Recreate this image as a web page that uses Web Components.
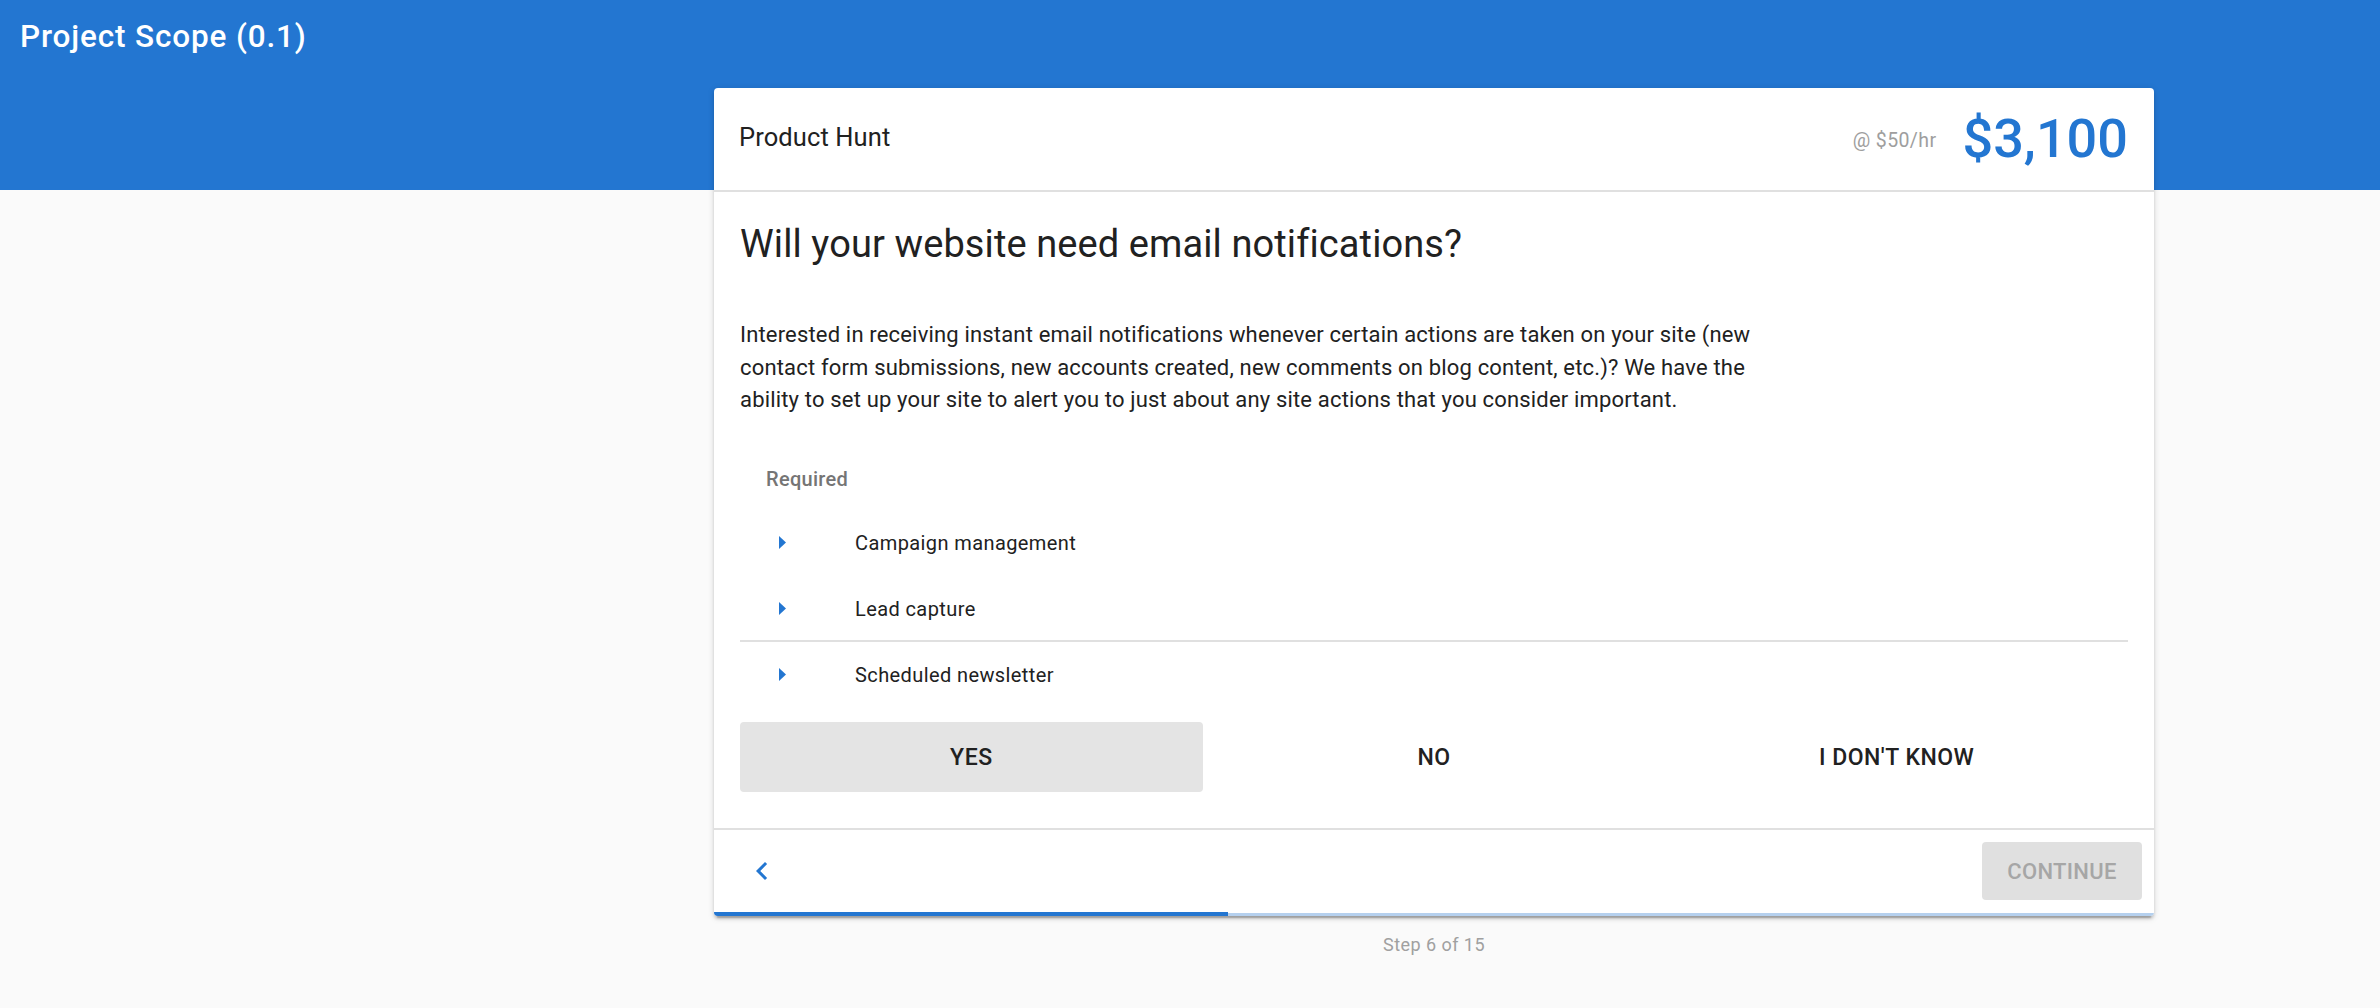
<!DOCTYPE html>
<html>
<head>
<meta charset="utf-8">
<title>Project Scope</title>
<style>
html, body { margin: 0; padding: 0; background: #fafafa; }
body { font-family: Roboto, "Liberation Sans", sans-serif; color: #212121; }
</style>
</head>
<body>
<scope-app title-text="Project Scope (0.1)">
  <scope-card project="Product Hunt" rate="@ $50/hr" total="$3,100" progress="514">
    <scope-question heading="Will your website need email notifications?">
      Interested in receiving instant email notifications whenever certain actions are taken on your site (new contact form submissions, new accounts created, new comments on blog content, etc.)? We have the ability to set up your site to alert you to just about any site actions that you consider important.
    </scope-question>
    <feature-list label="Required">
      <feature-row>Campaign management</feature-row>
      <feature-row>Lead capture</feature-row>
      <feature-row divided>Scheduled newsletter</feature-row>
    </feature-list>
    <choice-group>
      <choice-button selected>Yes</choice-button>
      <choice-button>No</choice-button>
      <choice-button>I don't know</choice-button>
    </choice-group>
  </scope-card>
  <step-label>Step 6 of 15</step-label>
</scope-app>

<script>
const BLUE = '#2376d1';

customElements.define('scope-app', class extends HTMLElement {
    constructor() {
        super();
        this.attachShadow({ mode: 'open' });
        this.shadowRoot.innerHTML = `
        <style>
        :host { display: block; min-height: 1008px; background: #fafafa; }
        header {
            height: 190px;
            box-sizing: border-box;
            padding: 19px 20px 0;
            background: ${BLUE};
            color: #fff;
            font-size: 31.5px;
            font-weight: 500;
            line-height: 36px;
            letter-spacing: .85px;
        }
        main {
            display: flex;
            flex-direction: column;
            width: 1440px;
            margin: -102px 0 0 714px;
        }
        </style>
        <header>${this.getAttribute('title-text')}</header>
        <main><slot></slot></main>`;
    }
});

customElements.define('scope-card', class extends HTMLElement {
    constructor() {
        super();
        this.attachShadow({ mode: 'open' });
        this.shadowRoot.innerHTML = `
        <style>
        :host {
            display: block;
            position: relative;
            background: #fff;
            border-radius: 4px;
            box-shadow: 0 4.5px 1.5px -3px rgba(0,0,0,.2), 0 3px 3px rgba(0,0,0,.14), 0 1.5px 7.5px rgba(0,0,0,.12);
            overflow: hidden;
        }
        .top {
            display: flex;
            align-items: center;
            height: 102px;
            padding: 0 26px;
            border-bottom: 2px solid #e0e0e0;
            font-size: 25.5px;
        }
        .project { flex: 1; letter-spacing: .1px; margin-top: -4px; margin-left: -1px; }
        .rate { color: #9e9e9e; font-size: 19.5px; letter-spacing: .4px; margin-right: 26px; margin-top: 2px; }
        .total { color: ${BLUE}; font-size: 54px; font-weight: 500; line-height: 66px; }
        .body { height: 636px; box-sizing: border-box; padding: 0 26px; display: flex; flex-direction: column; }
        .foot {
            display: flex;
            align-items: flex-start;
            justify-content: space-between;
            height: 88px;
            box-sizing: border-box;
            padding: 12px 12px 0 30px;
            border-top: 2px solid #e0e0e0;
        }
        .back { display: block; width: 36px; height: 36px; margin-top: 11px; }
        .continue {
            width: 160px;
            height: 58px;
            border-radius: 4px;
            background: #e0e0e0;
            color: #a6a6a6;
            font-size: 22px;
            font-weight: 500;
            letter-spacing: .3px;
            display: flex;
            align-items: center;
            justify-content: center;
        }
        .track {
            position: absolute;
            left: 0; right: 0; bottom: 0;
            height: 3px;
            background: #b5d0ee;
        }
        .fill {
            position: absolute;
            left: 0; bottom: 0;
            height: 4px;
            background: ${BLUE};
        }
        </style>
        <div class="top">
            <span class="project">${this.getAttribute('project')}</span>
            <span class="rate">${this.getAttribute('rate')}</span>
            <span class="total">${this.getAttribute('total')}</span>
        </div>
        <div class="body"><slot></slot></div>
        <div class="foot">
            <svg class="back" viewBox="0 0 24 24"><path d="M15.41 7.41 14 6l-6 6 6 6 1.41-1.41L10.83 12z" fill="${BLUE}"/></svg>
            <div class="continue">CONTINUE</div>
        </div>
        <div class="track"></div>
        <div class="fill" style="width:${this.getAttribute('progress')}px"></div>`;
    }
});

customElements.define('scope-question', class extends HTMLElement {
    constructor() {
        super();
        this.attachShadow({ mode: 'open' });
        this.shadowRoot.innerHTML = `
        <style>
        :host { display: block; }
        h2 { margin: 0; padding-top: 31px; font-size: 38px; line-height: 42px; font-weight: 400; letter-spacing: .1px; }
        p { margin: 54px 0 0; width: 1040px; font-size: 22px; line-height: 32.5px; letter-spacing: .17px; }
        </style>
        <h2>${this.getAttribute('heading')}</h2>
        <p><slot></slot></p>`;
    }
});

customElements.define('feature-list', class extends HTMLElement {
    constructor() {
        super();
        this.attachShadow({ mode: 'open' });
        this.shadowRoot.innerHTML = `
        <style>
        :host { display: block; margin-top: 46.5px; }
        .label { padding-left: 26px; height: 32px; line-height: 32px; margin-bottom: 15px; color: #757575; font-size: 20px; font-weight: 500; letter-spacing: .3px; }
        </style>
        <div class="label">${this.getAttribute('label')}</div>
        <slot></slot>`;
    }
});

customElements.define('feature-row', class extends HTMLElement {
    constructor() {
        super();
        this.attachShadow({ mode: 'open' });
        this.shadowRoot.innerHTML = `
        <style>
        :host { display: flex; align-items: center; height: 66px; box-sizing: border-box; font-size: 20px; letter-spacing: .4px; }
        :host([divided]) { border-top: 2px solid #e0e0e0; margin-top: -2px; height: 68px; margin-bottom: -2px; }
        svg { width: 7px; height: 13px; margin: 0 69px 0 39px; position: relative; top: -1px; }
        </style>
        <svg viewBox="0 0 7 13"><path d="M0 0l7 6.5-7 6.5z" fill="${BLUE}"/></svg>
        <slot></slot>`;
    }
});

customElements.define('choice-group', class extends HTMLElement {
    constructor() {
        super();
        this.attachShadow({ mode: 'open' });
        this.shadowRoot.innerHTML = `
        <style>
        :host { display: grid; grid-template-columns: repeat(3, 1fr); margin-top: 16px; }
        </style>
        <slot></slot>`;
    }
});

customElements.define('choice-button', class extends HTMLElement {
    constructor() {
        super();
        this.attachShadow({ mode: 'open' });
        this.shadowRoot.innerHTML = `
        <style>
        :host {
            display: flex;
            align-items: center;
            justify-content: center;
            height: 70px;
            border-radius: 4px;
            font-size: 23px;
            font-weight: 500;
            letter-spacing: .5px;
            text-transform: uppercase;
        }
        :host([selected]) { background: #e4e4e4; }
        </style>
        <slot></slot>`;
    }
});

customElements.define('step-label', class extends HTMLElement {
    constructor() {
        super();
        this.attachShadow({ mode: 'open' });
        this.shadowRoot.innerHTML = `
        <style>
        :host { display: block; margin-top: 17px; text-align: center; color: #a0a0a0; font-size: 18px; line-height: 24px; letter-spacing: .45px; }
        </style>
        <slot></slot>`;
    }
});
</script>
</body>
</html>
